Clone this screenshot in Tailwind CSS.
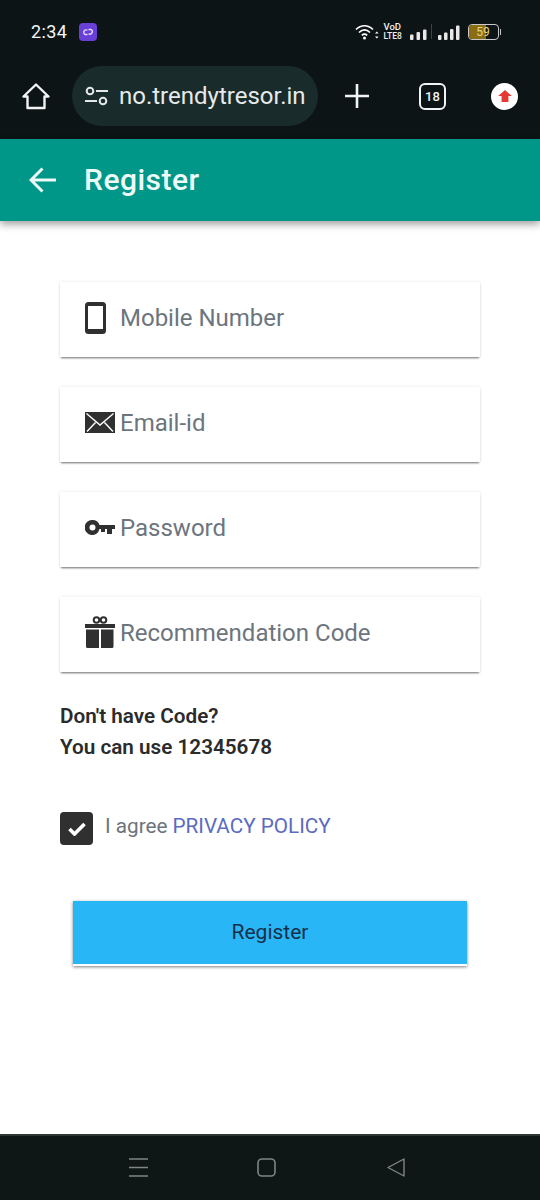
<!DOCTYPE html>
<html><head><meta charset="utf-8"><script src="https://cdn.jsdelivr.net/npm/@tailwindcss/browser@4"></script></head>
<body class="m-0 bg-white">
<div class="w-[540px] h-[1200px] flex flex-col overflow-hidden bg-white font-['Roboto',sans-serif]">
  <div class="h-[139px] shrink-0 bg-[#0c1415] flex flex-col">
    <div class="h-[62px] flex items-center pt-[1px] pl-[31px] pr-[39px] justify-between">
      <div class="flex items-center gap-[12px]">
        <span class="text-[#f4f6f6] text-[18px] leading-none tracking-[0.4px]">2:34</span>
        <div class="w-[18px] h-[18px] rounded-[4px] bg-[#6a3fd8] flex items-center justify-center">
          <svg width="12" height="8" viewBox="0 0 12 8" fill="none" stroke="#e8e0ff" stroke-width="1.300"><path d="M5.500 2.200A2.200 2.200 0 1 0 3 6.500H5.500M6.500 5.800A2.200 2.200 0 1 0 9 1.500H6.500"/></svg>
        </div>
      </div>
      <div class="flex items-center">
        <svg width="24" height="18" viewBox="0 0 24 18" fill="none" stroke="#fff" stroke-width="1.700" class="mr-[5px]"><path d="M1 6.500C6 1.500 13 1.500 18 6.500M4 9.500C7.500 6 11.500 6 15 9.500M6.800 12.300C8.500 10.800 10.500 10.800 12.200 12.300"/><circle cx="9.500" cy="15" r="1.500" fill="#fff" stroke="none"/><path d="M20 10.500l1.800-2 1.800 2zM20 13.500l1.800 2 1.800-2z" fill="#fff" stroke="none"/></svg>
        <div class="flex flex-col text-[#f0f0f0] text-[9.500px] leading-[8.500px] font-medium w-[19px] mr-[7px] whitespace-nowrap"><span>VoD</span><span class="text-[8.500px]">LTE8</span></div>
        <svg width="17" height="16" viewBox="0 0 17 16" fill="#e8e8e8" class="mr-[4px] relative top-[1px]"><rect x="0" y="9.500" width="3.500" height="5.500" rx="1"/><rect x="6.500" y="7" width="3.500" height="8" rx="1"/><rect x="13" y="4.500" width="3.500" height="10.500" rx="1"/></svg>
        <div class="w-[1px] h-[15px] bg-white/20 mr-[6px]"></div>
        <svg width="22" height="16" viewBox="0 0 22 16" fill="#e8e8e8" class="mr-[8px] relative top-[1px]"><rect x="0" y="10" width="3.500" height="5" rx="1"/><rect x="6" y="7.500" width="3.500" height="7.500" rx="1"/><rect x="12" y="4" width="3.500" height="11" rx="1"/><rect x="18" y="0.500" width="3.500" height="14.500" rx="1"/></svg>
        <div class="relative w-[31px] h-[16px] rounded-[4px] border border-[#c9c9c9] overflow-hidden flex items-center justify-center">
          <div class="absolute left-0 top-0 bottom-0 w-[59%] bg-[#8a6d12]"></div>
          <span class="relative text-[#e6d48a] text-[12px] leading-none">59</span>
        </div>
        <div class="w-[1.500px] h-[6px] bg-[#c9c9c9] ml-[1px]"></div>
      </div>
    </div>
    <div class="flex items-center h-[60px] pl-[21px] relative top-[4px]">
      <svg width="30" height="30" viewBox="0 0 30 30" fill="none" stroke="#f2f4f4" stroke-width="2.400" stroke-linejoin="round" class="mr-[21px]"><path d="M2.500 15.500L15 3.500L27.500 15.500H23.500V27H6.500V15.500Z"/></svg>
      <div class="w-[246px] h-[60px] rounded-full bg-[#1a2b2b] flex items-center pl-[13px]">
        <svg width="23" height="20" viewBox="0 0 23 20" fill="none" stroke="#e4e8e8" stroke-width="2" class="mr-[11px]"><circle cx="5" cy="5" r="3.300"/><path d="M11 5H23M0 15H12"/><circle cx="18" cy="15" r="3.300"/></svg>
        <span class="text-[#e6eaea] text-[24px] leading-none">no.trendytresor.in</span>
      </div>
      <svg width="26" height="26" viewBox="0 0 26 26" fill="none" stroke="#f2f4f4" stroke-width="2.600" class="ml-[26px]"><path d="M13 1V25M1 13H25"/></svg>
      <div class="ml-[49px] w-[27px] h-[27px] rounded-[6px] border-[2.500px] border-[#f2f4f4] flex items-center justify-center text-[#f2f4f4] text-[13px] font-medium leading-none">18</div>
      <div class="ml-[45px] w-[27px] h-[27px] rounded-full bg-white flex items-center justify-center">
        <svg width="14" height="12" viewBox="0 0 16 14" fill="#e53935"><path d="M8 0L16 7H12V14H4V7H0Z"/></svg>
      </div>
    </div>
  </div>
  <div class="h-[82px] shrink-0 bg-[#009688] shadow-[0_3px_8px_rgba(0,0,0,0.4)] flex items-center pl-[29px] relative">
    <svg width="27" height="26" viewBox="0 0 27 26" fill="none" stroke="#eefaf8" stroke-width="3"><path d="M27 13H2M13.500 1.500L2 13L13.500 24.500"/></svg>
    <span class="ml-[28px] text-[#eefaf8] text-[30px] leading-none font-medium tracking-[0.5px]">Register</span>
  </div>
  <div class="flex-1 flex flex-col px-[60px] pt-[61px]">
    <div class="flex flex-col gap-[30px]">
      <div class="h-[75px] bg-white shadow-[0_2px_2px_-1px_rgba(0,0,0,0.55),0_0_3px_rgba(0,0,0,0.1)] flex items-center pl-[25px] pb-[4px]">
        <div class="w-[35px] flex"><svg width="21" height="32" viewBox="0 0 21 32"><rect width="21" height="32" rx="3.500" fill="#303030"/><rect x="3" y="4" width="15" height="23" fill="#fff"/></svg></div>
        <span class="text-[#6c757d] text-[24px] leading-none">Mobile Number</span>
      </div>
      <div class="h-[75px] bg-white shadow-[0_2px_2px_-1px_rgba(0,0,0,0.55),0_0_3px_rgba(0,0,0,0.1)] flex items-center pl-[25px] pb-[4px]">
        <div class="w-[35px] flex"><svg width="30" height="21" viewBox="0 0 30 21"><path d="M0 0H30V21H0Z" fill="#303030"/><path d="M1.500 1.500L15 13L28.500 1.500M2 19.500L10.500 10.500M28 19.500L19.500 10.500" fill="none" stroke="#fff" stroke-width="1.400"/></svg></div>
        <span class="text-[#6c757d] text-[24px] leading-none">Email-id</span>
      </div>
      <div class="h-[75px] bg-white shadow-[0_2px_2px_-1px_rgba(0,0,0,0.55),0_0_3px_rgba(0,0,0,0.1)] flex items-center pl-[25px] pb-[4px]">
        <div class="w-[35px] flex"><svg width="30" height="15" viewBox="0 0 30 15" fill="#303030"><path fill-rule="evenodd" d="M7.500 0A7.500 7.500 0 0 1 14.500 5H30V9H27V14H22V9H20V12H16V9H14.500A7.500 7.500 0 1 1 7.500 0ZM7.500 4.500A3 3 0 1 0 7.500 10.500A3 3 0 0 0 7.500 4.500Z"/></svg></div>
        <span class="text-[#6c757d] text-[24px] leading-none">Password</span>
      </div>
      <div class="h-[75px] bg-white shadow-[0_2px_2px_-1px_rgba(0,0,0,0.55),0_0_3px_rgba(0,0,0,0.1)] flex items-center pl-[25px] pb-[4px]">
        <div class="w-[35px] flex"><svg width="30" height="33" viewBox="0 0 30 33" fill="#303030"><circle cx="11.500" cy="4" r="2.800" fill="none" stroke="#303030" stroke-width="2"/><circle cx="18.500" cy="4" r="2.800" fill="none" stroke="#303030" stroke-width="2"/><path d="M0 8H30V12H0Z"/><path d="M1 13.500H14V32H2.500A1.500 1.500 0 0 1 1 30.500ZM16 13.500H28.500V30.500A1.500 1.500 0 0 1 27 32H16Z"/></svg></div>
        <span class="text-[#6c757d] text-[24px] leading-none">Recommendation Code</span>
      </div>
    </div>
    <div class="mt-[29px] text-[#2b2b2b] text-[20.700px] leading-[31px] font-semibold">
      <p>Don't have Code?</p>
      <p>You can use 12345678</p>
    </div>
    <div class="mt-[49px] flex items-start">
      <div class="w-[33px] h-[33px] rounded-[4px] bg-[#303030] flex items-center justify-center">
        <svg width="18" height="14" viewBox="0 0 18 14" fill="none" stroke="#fff" stroke-width="3.600"><path d="M1.500 7L6.500 12L16.500 2"/></svg>
      </div>
      <p class="ml-[12px] text-[20.700px] leading-[28px] text-[#6c757d]">I agree <a class="text-[#5c6bc0]">PRIVACY POLICY</a></p>
    </div>
    <button class="mt-[56px] mx-[13px] h-[65px] bg-[#29b6f6] border-b-2 border-white shadow-[0_1px_3px_rgba(0,0,0,0.5)] text-[#14304a] text-[21px] leading-none">Register</button>
  </div>
  <div class="h-[66px] shrink-0 bg-[#0e1616] border-t-2 border-[#2e3434] flex items-center justify-between pl-[129px] pr-[135px] pb-[1px]">
    <svg width="19" height="19" viewBox="0 0 19 19" stroke="#7f8585" stroke-width="1.400"><path d="M0 1H19M0 9.500H19M0 18H19"/></svg>
    <svg width="19" height="19" viewBox="0 0 19 19" fill="none" stroke="#7f8585" stroke-width="1.600" class="relative left-[-1px]"><rect x="1" y="1" width="17" height="17" rx="4"/></svg>
    <svg width="18" height="19" viewBox="0 0 18 19" fill="none" stroke="#7f8585" stroke-width="1.400" stroke-linejoin="round"><path d="M1 9.500L17 1V18Z"/></svg>
  </div>
</div>
</body></html>
